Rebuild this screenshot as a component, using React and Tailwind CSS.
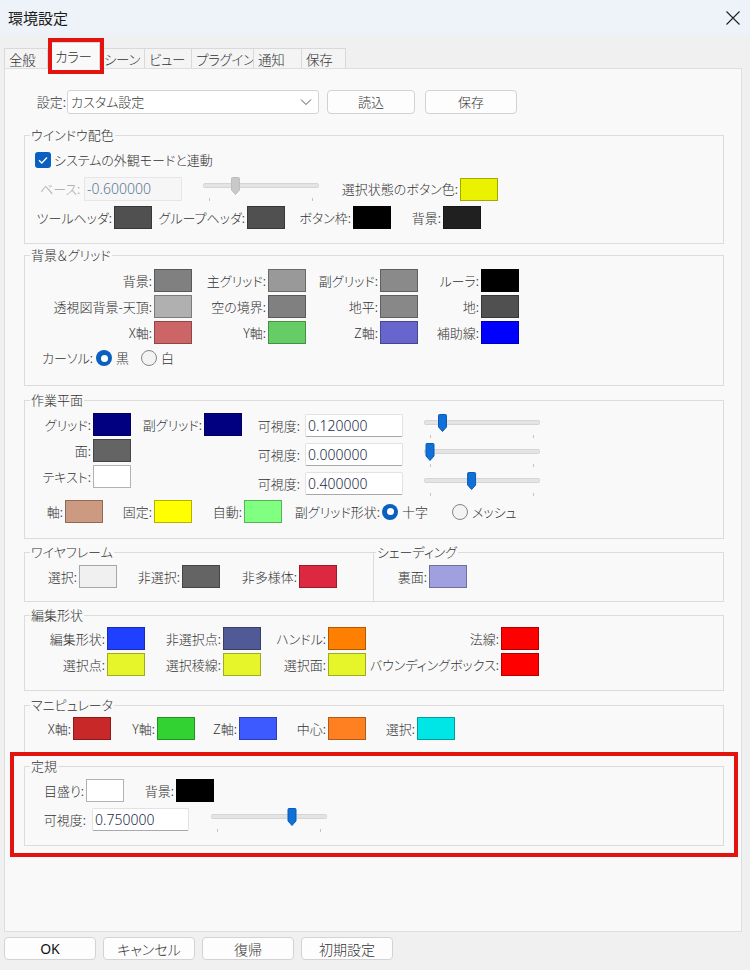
import React from "react";

function Swatch({ bg }) {
  return <span className={`block h-[23px] w-[38px] shrink-0 border border-black/30 ${bg}`} />;
}

function Item({ w, label, bg }) {
  return (
    <div className="flex items-center">
      <span className={`${w} flex justify-end whitespace-nowrap pr-[2px]`}>{label}:</span>
      <Swatch bg={bg} />
    </div>
  );
}

function Group({ title, className, legend = "ml-[5px]", children }) {
  return (
    <fieldset className={`border border-[#dcdcdc] ${className}`}>
      <legend className={`${legend} px-[1px] leading-[18px]`}>{title}</legend>
      {children}
    </fieldset>
  );
}

function Slider({ pos, off }) {
  return (
    <svg width="116" height="24" className="block shrink-0">
      <rect x="0.5" y="6.5" width="115" height="4" rx="1" fill="#e4e4e4" stroke="#d5d5d5" />
      <rect x="6" y="21" width="1" height="3" fill="#c4c4c4" />
      <rect x="109" y="21" width="1" height="3" fill="#c4c4c4" />
      <path
        transform={`translate(${pos - 4.5} 0)`}
        d="M1.5 0.5H7.5Q8.5 0.5 8.5 1.5V13L4.5 17.5L0.5 13V1.5Q0.5 0.5 1.5 0.5Z"
        fill={off ? "#c9c9c9" : "#1170d6"}
        stroke={off ? "#bebebe" : "#0a5cb8"}
      />
    </svg>
  );
}

function Radio({ on }) {
  return on ? (
    <span className="flex h-[16px] w-[16px] shrink-0 items-center justify-center rounded-full bg-[#0a5fc0]">
      <span className="h-[7px] w-[7px] rounded-full bg-white" />
    </span>
  ) : (
    <span className="block h-[16px] w-[16px] shrink-0 rounded-full border border-[#858585] bg-[#f3f3f3]" />
  );
}

function NumBox({ value, w = "w-[98px]" }) {
  return (
    <div className={`flex h-[23px] ${w} items-center rounded-[2px] border border-[#e2e2e2] border-b-[#a8a8a8] bg-white pl-[2px] font-['Noto_Sans',sans-serif] text-[14px] text-[#1c2b45]`}>
      {value}
    </div>
  );
}

const bgGrid = [
  [
    ["w-[129px]", "背景", "bg-[#808080]"],
    ["w-[76px]", "主グリッド", "bg-[#999999]"],
    ["w-[74px]", "副グリッド", "bg-[#8a8a8a]"],
    ["w-[63px]", "ルーラ", "bg-[#000000]"],
  ],
  [
    ["w-[129px]", "透視図背景-天頂", "bg-[#b0b0b0]"],
    ["w-[76px]", "空の境界", "bg-[#808080]"],
    ["w-[74px]", "地平", "bg-[#888888]"],
    ["w-[63px]", "地", "bg-[#505050]"],
  ],
  [
    ["w-[129px]", "X軸", "bg-[#cc6666]"],
    ["w-[76px]", "Y軸", "bg-[#66cc66]"],
    ["w-[74px]", "Z軸", "bg-[#6666cc]"],
    ["w-[63px]", "補助線", "bg-[#0000ff]"],
  ],
];

const editGrid = [
  [
    ["w-[82px]", "編集形状", "bg-[#2040ff]"],
    ["w-[78px]", "非選択点", "bg-[#505a96]"],
    ["w-[67px]", "ハンドル", "bg-[#ff8000]"],
    ["w-[135px]", "法線", "bg-[#ff0000]"],
  ],
  [
    ["w-[82px]", "選択点", "bg-[#e6f52a]"],
    ["w-[78px]", "選択稜線", "bg-[#e6f52a]"],
    ["w-[67px]", "選択面", "bg-[#e6f52a]"],
    ["w-[135px]", "バウンディングボックス", "bg-[#ff0000]"],
  ],
];

const manip = [
  ["w-[48px]", "X軸", "bg-[#c82828]"],
  ["w-[46px]", "Y軸", "bg-[#32d232]"],
  ["w-[44px]", "Z軸", "bg-[#3c5aff]"],
  ["w-[51px]", "中心", "bg-[#ff8020]"],
  ["w-[51px]", "選択", "bg-[#00e6e6]"],
];

const tabs = [
  ["全般", "w-[44px]"],
  ["カラー", "w-[52px]"],
  ["シーン", "w-[45px]"],
  ["ビュー", "w-[47px]"],
  ["プラグイン", "w-[62px]"],
  ["通知", "w-[48px]"],
  ["保存", "w-[44px]"],
];

// thumb centre = 6 + value * 104
const visRows = [
  ["0.120000", 18.5],
  ["0.000000", 6],
  ["0.400000", 47.6],
];

export default function App() {
  return (
    <div className="h-[970px] w-[750px] overflow-hidden bg-[#f0f0f0] font-['Noto_Sans_CJK_JP',sans-serif] text-[13px] font-light leading-[18px] text-[#333333] [font-feature-settings:'palt']">
      {/* title bar */}
      <div className="flex h-[35px] items-center justify-between bg-[#eef2f9] pl-[8px] pr-[10px]">
        <span className="text-[15px] font-normal text-[#1b1b1b]">環境設定</span>
        <svg width="14" height="14" className="block">
          <path d="M0.5 0.5L13.5 13.5M13.5 0.5L0.5 13.5" stroke="#1f1f1f" strokeWidth="1.1" />
        </svg>
      </div>

      {/* tabs */}
      <div className="relative z-10 flex h-[34px] items-end whitespace-nowrap pl-[4px] text-[13.5px] tracking-[-0.3px]">
        {tabs.map(([t, w], i) =>
          i === 1 ? (
            <div key={t} className={`${w} h-[27px] border border-b-0 border-[#d6d6d6] bg-[#f9f9f9] pl-[6px] pt-[4px]`}>
              {t}
            </div>
          ) : (
            <div key={t} className={`${w} mb-[1px] flex h-[20px] items-center overflow-hidden border-t border-r border-[#d9d9d9] bg-[#f4f4f4] pl-[4px] ${i === 0 ? "border-l" : ""}`}>
              {t}
            </div>
          )
        )}
        <div className="absolute left-[48px] top-[3px] h-[36px] w-[56px] border-4 border-[#e3130f]" />
      </div>

      {/* panel */}
      <div className="-mt-[1px] ml-[4px] h-[864px] w-[738px] border border-[#dedede] bg-[#f9f9f9] pl-[19px] pt-[21px]">
        <div className="flex h-[24px] items-center">
          <span className="w-[43px] pr-[1px] text-right">設定:</span>
          <div className="flex h-[24px] w-[252px] items-center justify-between rounded-[3px] border border-[#d4d4d4] bg-white pl-[3px] pr-[6px]">
            <span>カスタム設定</span>
            <svg width="12" height="8" className="block">
              <path d="M1 1.5L6 6.5L11 1.5" stroke="#555" fill="none" />
            </svg>
          </div>
          <button className="ml-[8px] h-[24px] w-[88px] rounded-[4px] border border-[#d2d2d2] bg-[#fdfdfd]">読込</button>
          <button className="ml-[10px] h-[24px] w-[92px] rounded-[4px] border border-[#d2d2d2] bg-[#fdfdfd]">保存</button>
        </div>

        {/* ウインドウ配色 */}
        <Group title="ウインドウ配色" className="mt-[12px] h-[118px] w-[700px]">
          <div className="pt-[6px]">
            <div className="flex h-[20px] items-center pl-[10px]">
              <svg width="16" height="16" className="block">
                <rect width="16" height="16" rx="3" fill="#0a5fc0" />
                <path d="M4 8.2L6.8 11L12 5.5" stroke="#fff" strokeWidth="1.3" fill="none" />
              </svg>
              <span className="ml-[3px]">システムの外観モードと連動</span>
            </div>
            <div className="mt-[7px] flex h-[24px] items-center">
              <span className="w-[59px] pl-[15px] text-[#a5a5a5]">ベース:</span>
              <div className="flex h-[24px] w-[98px] items-center border border-[#e6e6e6] bg-[#f6f6f6] pl-[2px] font-['Noto_Sans',sans-serif] text-[14px] text-[#5b7595]">
                -0.600000
              </div>
              <div className="ml-[21px]">
                <Slider pos={32.5} off />
              </div>
              <span className="flex w-[141px] justify-end whitespace-nowrap pr-[2px]">選択状態のボタン色:</span>
              <Swatch bg="bg-[#eaf200]" />
            </div>
            <div className="mt-[5px] flex items-center">
              <Item w="w-[89px]" label="ツールヘッダ" bg="bg-[#505050]" />
              <Item w="w-[95px]" label="グループヘッダ" bg="bg-[#505050]" />
              <Item w="w-[68px]" label="ボタン枠" bg="bg-[#000000]" />
              <Item w="w-[52px]" label="背景" bg="bg-[#202020]" />
            </div>
          </div>
        </Group>

        {/* 背景&グリッド */}
        <Group title="背景＆グリッド" className="mt-[2px] h-[140px] w-[700px]">
          <div className="flex flex-col gap-[3px] pt-[5px]">
            {bgGrid.map((row, i) => (
              <div key={i} className="flex items-center">
                {row.map(([w, l, bg]) => (
                  <Item key={l} w={w} label={l} bg={bg} />
                ))}
              </div>
            ))}
          </div>
          <div className="mt-[5px] flex h-[18px] items-center pl-[17px]">
            <span>カーソル:</span>
            <span className="ml-[3px]">
              <Radio on />
            </span>
            <span className="ml-[4px]">黒</span>
            <span className="ml-[12px]">
              <Radio />
            </span>
            <span className="ml-[4px]">白</span>
          </div>
        </Group>

        {/* 作業平面 */}
        <Group title="作業平面" className="mt-[5px] h-[148px] w-[700px]">
          <div className="pt-[4px]">
            <div className="flex">
              <div className="flex flex-col gap-[3px]">
                <div className="flex items-center">
                  <Item w="w-[68px]" label="グリッド" bg="bg-[#000080]" />
                  <Item w="w-[73px]" label="副グリッド" bg="bg-[#000080]" />
                </div>
                <Item w="w-[68px]" label="面" bg="bg-[#646464]" />
                <Item w="w-[68px]" label="テキスト" bg="bg-[#ffffff]" />
              </div>
              <div className="flex flex-col gap-[6px] pt-[1px]">
                {visRows.map(([v, p]) => (
                  <div key={v} className="flex h-[23px] items-center">
                    <span className="w-[63px] pr-[5px] text-right">可視度:</span>
                    <NumBox value={v} />
                    <div className="ml-[21px] self-start">
                      <Slider pos={p} />
                    </div>
                  </div>
                ))}
              </div>
            </div>
            <div className="mt-[5px] flex items-center">
              <Item w="w-[40px]" label="軸" bg="bg-[#cc9a80]" />
              <Item w="w-[51px]" label="固定" bg="bg-[#ffff00]" />
              <Item w="w-[52px]" label="自動" bg="bg-[#80ff80]" />
              <span className="flex w-[100px] justify-end whitespace-nowrap pr-[2px]">副グリッド形状:</span>
              <Radio on />
              <span className="ml-[4px]">十字</span>
              <span className="ml-[24px]">
                <Radio />
              </span>
              <span className="ml-[4px]">メッシュ</span>
            </div>
          </div>
        </Group>

        {/* ワイヤフレーム / シェーディング */}
        <div className="mt-[4px] flex">
          <Group title="ワイヤフレーム" className="h-[59px] w-[350px]">
            <div className="flex items-center pt-[4px]">
              <Item w="w-[54px]" label="選択" bg="bg-[#f0f0f0]" />
              <Item w="w-[65px]" label="非選択" bg="bg-[#646464]" />
              <Item w="w-[79px]" label="非多様体" bg="bg-[#dc2840]" />
            </div>
          </Group>
          <Group title="シェーディング" legend="ml-[2px]" className="-ml-[1px] h-[59px] w-[351px]">
            <div className="flex items-center pt-[4px]">
              <Item w="w-[55px]" label="裏面" bg="bg-[#a0a0e0]" />
            </div>
          </Group>
        </div>

        {/* 編集形状 */}
        <Group title="編集形状" className="mt-[4px] h-[85px] w-[700px]">
          <div className="flex flex-col gap-[3px] pt-[3px]">
            {editGrid.map((row, i) => (
              <div key={i} className="flex items-center">
                {row.map(([w, l, bg]) => (
                  <Item key={l} w={w} label={l} bg={bg} />
                ))}
              </div>
            ))}
          </div>
        </Group>

        {/* マニピュレータ */}
        <Group title="マニピュレータ" className="mt-[5px] h-[60px] w-[700px]">
          <div className="flex items-center pt-[3px]">
            {manip.map(([w, l, bg]) => (
              <Item key={l} w={w} label={l} bg={bg} />
            ))}
          </div>
        </Group>

        {/* 定規 */}
        <div className="relative mt-[1px] w-[700px]">
          <Group title="定規" className="h-[89px] w-[700px]">
            <div className="pt-[4px]">
              <div className="flex items-center">
                <Item w="w-[61px]" label="目盛り" bg="bg-[#ffffff]" />
                <Item w="w-[52px]" label="背景" bg="bg-[#000000]" />
              </div>
              <div className="mt-[6px] flex h-[23px] items-center">
                <span className="w-[67px] pr-[6px] text-right">可視度:</span>
                <NumBox value="0.750000" w="w-[97px]" />
                <div className="ml-[22px] self-start">
                  <Slider pos={81} />
                </div>
              </div>
            </div>
          </Group>
          <div className="absolute -left-[14px] -top-[5px] h-[105px] w-[728px] border-4 border-[#e3130f]" />
        </div>
      </div>

      {/* footer buttons */}
      <div className="mt-[5px] flex gap-[7px] pl-[4px] text-[14px]">
        <button className="h-[23px] w-[92px] rounded-[4px] border border-[#d3d3d3] bg-[#fdfdfd] font-['Noto_Sans',sans-serif] font-normal text-[#111]">OK</button>
        <button className="h-[23px] w-[92px] rounded-[4px] border border-[#d3d3d3] bg-[#fdfdfd]">キャンセル</button>
        <button className="h-[23px] w-[92px] rounded-[4px] border border-[#d3d3d3] bg-[#fdfdfd]">復帰</button>
        <button className="h-[23px] w-[92px] rounded-[4px] border border-[#d3d3d3] bg-[#fdfdfd]">初期設定</button>
      </div>
    </div>
  );
}
